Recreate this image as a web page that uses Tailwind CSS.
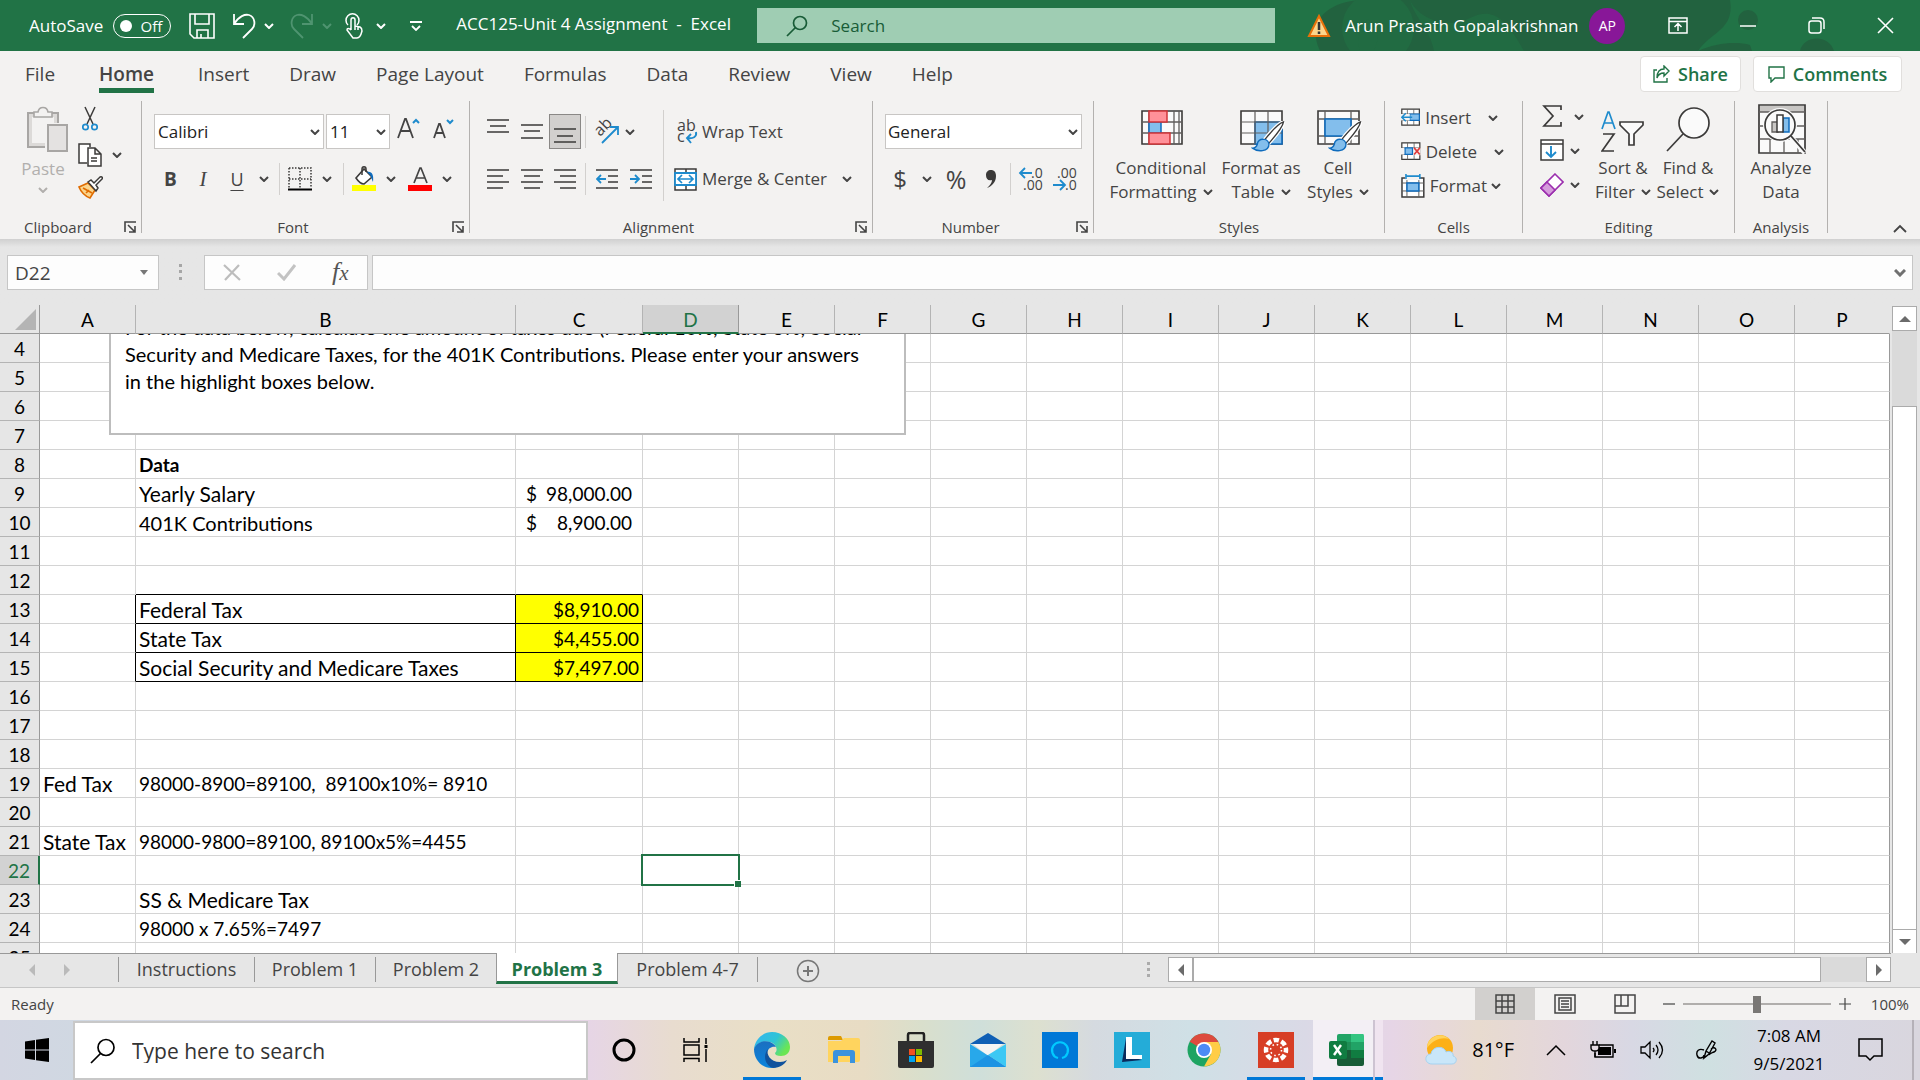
<!DOCTYPE html>
<html lang="en">
<head>
    <meta charset="UTF-8">
    <meta name="viewport" content="width=device-width, initial-scale=1.0">
    <title>ACC125-Unit 4 Assignment - Excel</title>
    <script src="https://cdn.jsdelivr.net/npm/@tailwindcss/browser@4"></script>
</head>
<body class="flex h-screen flex-col overflow-hidden bg-[#f3f2f1] font-['Open_Sans','Noto_Sans',sans-serif] text-[17px] leading-6 text-[#444]">

    <!-- Shared icons -->
    <svg class="hidden">
        <symbol id="chev" viewBox="0 0 10 6"><path d="M1 1l4 4 4-4" fill="none" stroke="currentColor" stroke-width="2"/></symbol>
        <symbol id="launcher" viewBox="0 0 12 12"><path d="M1 11V1h11M4 4l7 7M11 5v6H5" fill="none" stroke="currentColor" stroke-width="1.6"/></symbol>
        <symbol id="brush" viewBox="0 0 34 32"><path d="M33 1C27 3 17 15 13 20l4 4C22 18 32 8 33 1z" fill="#fff" stroke="#fff" stroke-width="4"/><path d="M33 1C27 3 17 15 13 20l4 4C22 18 32 8 33 1z" fill="#fff" stroke="#3b3a39" stroke-width="1.4"/><path d="M13 19c-4-1-7 2-7 5-1 3-3 4-5 4 5 4 17 4 17-4 0-2-2-5-5-5z" fill="#83beec" stroke="#0f6cbd" stroke-width="1.4"/></symbol>
    </svg>

    <!-- Title bar -->
    <header class="relative flex h-[51px] shrink-0 items-center bg-[#217346] text-white">
        <svg class="absolute right-0 top-0" width="720" height="51" viewBox="0 0 720 51">
            <g fill="#22623f">
                <path d="M120 51C105 20 130 0 165 0h365c5 30-20 32-32 51z"/>
                <circle cx="178" cy="28" r="36" fill="#216b42"/>
                <path d="M498 51c18-8 38-10 52-6l2 6z"/>
                <path d="M600 51c3-15 28-18 34 0z"/>
                <circle cx="548" cy="20" r="10"/>
            </g>
            <path d="M160 51c-4-14 2-28 8-32 14 10 10 22 6 32zM210 0c8 18 36 30 60 18 20-10 34-4 54 33h-90c-4-22-20-34-24-51z" fill="#216b42"/>
        </svg>
        <div class="relative flex w-full items-center">
            <label class="ml-[29px] flex items-center gap-[10px] text-[17px]">AutoSave
                <button class="flex h-6 w-[58px] items-center justify-between rounded-full border border-white pl-1.5 pr-2 text-[15px]"><span class="size-3 rounded-full bg-white"></span>Off</button>
            </label>
            <button class="ml-[18px]" aria-label="Save"><svg width="26" height="26" viewBox="0 0 26 26" fill="none" stroke="#fff" stroke-width="1.6"><path d="M1 1h24v24H5l-4-4zM6 1v10h14V1M8 25v-8h11v8M12 25v-4"/></svg></button>
            <button class="ml-[17px]" aria-label="Undo"><svg width="24" height="26" viewBox="0 0 24 26" fill="none" stroke="#fff" stroke-width="1.8"><path d="M2 1v10h10M2 11C7 3 13 1 17 2c6 2 7 10 3 14l-9 9"/></svg></button>
            <svg class="ml-2" width="10" height="6"><use href="#chev"/></svg>
            <button class="ml-4 text-[#4f9470]" aria-label="Redo"><svg width="24" height="26" viewBox="0 0 24 26" fill="none" stroke="currentColor" stroke-width="1.8"><path d="M22 1v10H12M22 11C17 3 11 1 7 2c-6 2-7 10-3 14l9 9"/></svg></button>
            <svg class="ml-2 text-[#4f9470]" width="10" height="6"><use href="#chev"/></svg>
            <button class="ml-3" aria-label="Touch mode"><svg width="20" height="26" viewBox="0 0 20 26" fill="none" stroke="#fff" stroke-width="1.5"><path d="M4 12a6.500 6.500 0 1 1 9 0"/><path d="M7 17V7c0-3 4-3 4 0v6l5 1c2 1 2 2 2 4-1 4-2 7-5 7H9l-6-8c0-2 2-2 4 0M11 13v4M14 14v3"/></svg></button>
            <svg class="ml-3" width="10" height="6"><use href="#chev"/></svg>
            <svg class="ml-6" width="12" height="10" viewBox="0 0 12 10" fill="none" stroke="#fff" stroke-width="1.8"><path d="M0 1h12M2 5l4 4 4-4"/></svg>
            <h1 class="ml-[34px] w-[301px] whitespace-pre pb-[3px]">ACC125-Unit 4 Assignment  -  Excel</h1>
            <label class="flex h-[35px] w-[518px] items-center bg-[#9fcdb3] pl-[29px] text-[#185c37]">
                <svg width="22" height="22" viewBox="0 0 22 22" fill="none" stroke="#185c37" stroke-width="1.7"><circle cx="14" cy="8" r="6.500"/><path d="M9.500 12.500L1 21"/></svg>
                <input class="ml-[23px] w-60 bg-transparent placeholder:text-[#185c37] outline-none" placeholder="Search" aria-label="Search">
            </label>
            <svg class="ml-8" width="24" height="24" viewBox="0 0 24 24"><path d="M12 2l10 20H2z" fill="#fbd58c" stroke="#e8710a" stroke-width="2"/><path d="M12 8v8M12 17.500v2.500" stroke="#333" stroke-width="2.500"/></svg>
            <span class="ml-[14px] w-[230px] whitespace-nowrap">Arun Prasath Gopalakrishnan</span>
            <button class="ml-[14px] flex size-9 items-center justify-center rounded-full bg-[#881798] text-[14px]">AP</button>
            <div class="ml-auto flex items-center gap-[52px] pr-[26px]">
                <button aria-label="Ribbon display options"><svg width="20" height="17" viewBox="0 0 20 17" fill="none" stroke="#fff" stroke-width="1.5"><path d="M1 1h18v15H1zM1 4.500h18M10 14V7M6.500 10L10 6.500l3.500 3.500"/></svg></button>
                <button aria-label="Minimize"><svg width="16" height="16"><path d="M0 8h16" stroke="#fff" stroke-width="1.5"/></svg></button>
                <button aria-label="Restore"><svg width="17" height="17" viewBox="0 0 17 17" fill="none" stroke="#fff" stroke-width="1.5"><rect x="1" y="4" width="12" height="12" rx="2.500"/><path d="M4 1h8q4 0 4 4v7"/></svg></button>
                <button aria-label="Close"><svg width="17" height="17"><path d="M1 1l15 15M16 1L1 16" stroke="#fff" stroke-width="1.6"/></svg></button>
            </div>
        </div>
    </header>

    <!-- Ribbon tabs -->
    <nav class="flex h-[50px] shrink-0 items-start gap-10 pl-[25px] pr-[18px] pt-[9px] text-[19px] leading-7">
        <a href="#">File</a>
        <a href="#" class="mx-1 border-b-[5px] border-[#217346] font-semibold">Home</a>
        <a href="#">Insert</a>
        <a href="#">Draw</a>
        <a href="#">Page Layout</a>
        <a href="#">Formulas</a>
        <a href="#">Data</a>
        <a href="#">Review</a>
        <a href="#">View</a>
        <a href="#">Help</a>
        <div class="-mt-1 ml-auto flex gap-3 font-semibold text-[#217346]">
            <button class="flex h-9 w-[101px] items-center justify-center gap-2 rounded border border-[#e1dfdd] bg-white text-[18px]"><svg width="17" height="18" viewBox="0 0 17 18" fill="none" stroke="currentColor" stroke-width="1.4"><path d="M4 5H1v12h13v-4M11 1l5 5-5 5V8c-4 0-6 2-7 5 0-6 3-9 7-9z"/></svg>Share</button>
            <button class="flex h-9 w-[149px] items-center justify-center gap-2 rounded border border-[#e1dfdd] bg-white text-[18px]"><svg width="17" height="17" viewBox="0 0 17 17" fill="none" stroke="currentColor" stroke-width="1.4"><path d="M1 1h15v11H7l-4 4v-4H1z"/></svg>Comments</button>
        </div>
    </nav>

    <!-- Ribbon -->
    <div class="flex h-[138px] shrink-0">
        <section class="flex h-[132px] w-[142px] flex-col border-r border-[#b3b1af]">
            <div class="flex flex-1 pt-[5px]">
                <button class="ml-[18px] flex w-[50px] flex-col items-center text-[#b1afad]">
                    <svg class="ml-2" width="42" height="46" viewBox="0 0 42 46" stroke="#a8a6a4" stroke-width="2"><path d="M2 7h30v34H2z" fill="#dcdad8"/><path d="M6 11h22v26H6z" fill="#f3f2f1" stroke="none"/><path d="M8 11V6h4c1-6 9-6 10 0h4v5z" fill="#f3f2f1" stroke-width="1.600"/><path d="M21 19h20v26H21z" fill="#e6e4e3" stroke="#f3f2f1" stroke-width="4"/><path d="M22 19h19v26H22z" fill="#e4e2e1"/></svg>
                    <span class="mt-[5px]">Paste</span>
                    <svg class="mt-1.5" width="10" height="6"><use href="#chev"/></svg>
                </button>
                <div class="ml-2.5 flex flex-col gap-3">
                    <button class="ml-1" aria-label="Cut"><svg width="16" height="25" viewBox="0 0 16 25" fill="none" stroke="#3b3a39" stroke-width="1.500"><path d="M3 1l8 17M13 1L5 18"/><circle cx="3.500" cy="21" r="2.700" stroke="#1e8bcd" stroke-width="1.700"/><circle cx="12.500" cy="21" r="2.700" stroke="#1e8bcd" stroke-width="1.700"/></svg></button>
                    <div class="flex items-center gap-[10px]">
                        <button aria-label="Copy"><svg width="24" height="24" viewBox="0 0 24 24" fill="#fff" stroke="#3b3a39" stroke-width="1.500"><path d="M9 20H1V1h11v3"/><path d="M10 5h7l6 6v12H10zM17 5v6h6M13 15h6M13 18h6"/></svg></button>
                        <svg width="10" height="6"><use href="#chev"/></svg>
                    </div>
                    <button class="-mt-1" aria-label="Format painter"><svg width="25" height="24" viewBox="0 0 25 24"><path d="M1 12l9-4 7 7-5 8C7 21 3 17 1 12z" fill="#fbd58c" stroke="#e06c00" stroke-width="1.600"/><path d="M8 18l3-3M5 13l9 5" stroke="#e06c00" stroke-width="1.600"/><path d="M10 7l3-2 3 3 6-6c2-1 3 1 2 2l-6 6 2 3-2 3z" fill="#fff" stroke="#3b3a39" stroke-width="1.500"/></svg></button>
                </div>
            </div>
            <div class="flex h-3 items-center justify-end gap-8 pr-[5px] text-[15px]"><span>Clipboard</span><svg width="12" height="12"><use href="#launcher"/></svg></div>
        </section>

        <section class="flex h-[132px] w-[328px] flex-col border-r border-[#b3b1af]">
            <div class="flex-1 pt-[13px]">
                <div class="flex h-[35px] items-center pl-3">
                    <div class="relative flex h-[35px] w-[170px] items-center">
                        <select aria-label="Font" class="size-full appearance-none border border-[#c8c6c4] bg-white pl-[3px] text-[#222]"><option>Calibri</option></select>
                        <svg class="absolute right-1" width="10" height="6"><use href="#chev"/></svg>
                    </div>
                    <div class="relative ml-0.5 flex h-[35px] w-16 items-center">
                        <select aria-label="Font size" class="size-full appearance-none border border-[#c8c6c4] bg-white pl-[3px] text-[#222]"><option>11</option></select>
                        <svg class="absolute right-1" width="10" height="6"><use href="#chev"/></svg>
                    </div>
                    <button class="-mt-2 ml-[7px]" aria-label="Increase font size"><svg width="23" height="24" viewBox="0 0 23 24" fill="none" stroke="#444" stroke-width="1.800"><path d="M1 22L8 3h1l7 19M3.500 15h10"/><path d="M16 7l3-3 3 3" stroke="#1e8bcd" stroke-width="2"/></svg></button>
                    <button class="-mt-2 ml-3" aria-label="Decrease font size"><svg width="23" height="24" viewBox="0 0 23 24" fill="none" stroke="#444" stroke-width="1.800"><path d="M2 22l5-14h1l5 14M4 17h7"/><path d="M15 4l3 3 3-3" stroke="#1e8bcd" stroke-width="2"/></svg></button>
                </div>
                <div class="mt-[14px] flex h-8 items-center pl-[22px]">
                    <button class="w-3 text-[19px] font-bold">B</button>
                    <button class="ml-[21px] w-3 font-['Liberation_Serif',serif] text-[21px] italic">I</button>
                    <button class="ml-[21px] w-3.5 text-[18px] underline underline-offset-4">U</button>
                    <svg class="ml-[15px]" width="10" height="6"><use href="#chev"/></svg>
                    <div class="ml-[10px] h-full w-px bg-[#d2d0ce]"></div>
                    <button class="ml-2" aria-label="Borders"><svg width="24" height="24" viewBox="0 0 24 24" fill="none" stroke="#3b3a39" stroke-width="1.500"><path d="M1 1h22v20M1 1v20M12 1v20M1 12h22" stroke-dasharray="1.500 1.500"/><path d="M0 22.500h24" stroke="#000" stroke-width="2"/></svg></button>
                    <svg class="ml-2.5" width="10" height="6"><use href="#chev"/></svg>
                    <div class="ml-[11px] h-full w-px bg-[#d2d0ce]"></div>
                    <button class="ml-2" aria-label="Fill color"><svg width="24" height="26" viewBox="0 0 24 26" fill="none"><path d="M4 12l8-9 8 8-8 7c-3 0-6-3-8-6z" fill="#fff" stroke="#3b3a39" stroke-width="1.600"/><path d="M10 9V3c0-3 4-3 4 0v3" stroke="#3b3a39" stroke-width="1.500"/><path d="M15 6c5-1 7 3 6 10-2-4-1-6-6-10z" fill="#0f6cbd"/><path d="M0 19h24v6H0z" fill="#ff0"/></svg></button>
                    <svg class="ml-2.5" width="10" height="6"><use href="#chev"/></svg>
                    <button class="ml-3" aria-label="Font color"><svg width="24" height="26" viewBox="0 0 24 26" fill="none"><path d="M6 17l6-15h1l6 15M8 12h9" stroke="#444" stroke-width="1.700"/><path d="M0 19h24v6H0z" fill="red"/></svg></button>
                    <svg class="ml-2.5" width="10" height="6"><use href="#chev"/></svg>
                </div>
            </div>
            <div class="flex h-3 items-center pr-[5px] text-[15px]"><span class="flex-1 pr-2 text-center">Font</span><svg width="12" height="12"><use href="#launcher"/></svg></div>
        </section>

        <section class="flex h-[132px] w-[403px] flex-col border-r border-[#b3b1af]">
            <div class="flex flex-1">
                <div class="w-[193px] pl-[11px] pt-[13px]">
                    <div class="flex h-[35px] items-center">
                        <button class="flex h-[35px] w-[34px] justify-center pt-1" aria-label="Top align"><svg width="22" height="16" stroke="#3b3a39" stroke-width="1.600"><path d="M0 2h22M3 8h16M0 14h22"/></svg></button>
                        <button class="flex h-[35px] w-[34px] items-center justify-center" aria-label="Middle align"><svg width="22" height="16" stroke="#3b3a39" stroke-width="1.600"><path d="M0 1h22M3 7h16M0 14h22"/></svg></button>
                        <button class="flex h-[35px] w-8 items-end justify-center border border-[#8a8886] bg-[#d2d0ce] pb-1" aria-label="Bottom align"><svg width="22" height="16" stroke="#3b3a39" stroke-width="1.600"><path d="M0 1h22M3 8h16M0 14h22"/></svg></button>
                        <div class="ml-1 h-8 w-px bg-[#d2d0ce]"></div>
                        <button class="ml-2" aria-label="Orientation"><svg class="overflow-visible" width="25" height="26" viewBox="0 0 25 26"><text x="0" y="0" transform="translate(6 18) rotate(-45)" font-size="16" fill="#444">ab</text><path d="M8 24L23 9M16 8h8v8" fill="none" stroke="#1e8bcd" stroke-width="1.800"/></svg></button>
                        <svg class="ml-1.5" width="10" height="6"><use href="#chev"/></svg>
                    </div>
                    <div class="mt-[14px] flex h-8 items-center">
                        <button class="flex w-[34px] justify-center" aria-label="Align left"><svg width="22" height="22" stroke="#3b3a39" stroke-width="1.600"><path d="M0 2h22M0 8h16M0 14h22M0 20h16"/></svg></button>
                        <button class="flex w-[34px] justify-center" aria-label="Center"><svg width="22" height="22" stroke="#3b3a39" stroke-width="1.600"><path d="M0 2h22M3 8h16M0 14h22M3 20h16"/></svg></button>
                        <button class="flex w-8 justify-center" aria-label="Align right"><svg width="22" height="22" stroke="#3b3a39" stroke-width="1.600"><path d="M0 2h22M6 8h16M0 14h22M6 20h16"/></svg></button>
                        <div class="ml-1 h-full w-px bg-[#d2d0ce]"></div>
                        <button class="ml-2.5" aria-label="Decrease indent"><svg width="22" height="22" fill="none" stroke="#3b3a39" stroke-width="1.600"><path d="M0 2h22M12 8h10M12 14h10M0 20h22"/><path d="M10 11H1M5 7l-4 4 4 4" stroke="#1e8bcd" stroke-width="1.800"/></svg></button>
                        <button class="ml-3" aria-label="Increase indent"><svg width="22" height="22" fill="none" stroke="#3b3a39" stroke-width="1.600"><path d="M0 2h22M12 8h10M12 14h10M0 20h22"/><path d="M0 11h9M5 7l4 4-4 4" stroke="#1e8bcd" stroke-width="1.800"/></svg></button>
                    </div>
                </div>
                <div class="mt-[9px] h-[91px] w-px bg-[#d2d0ce]"></div>
                <div class="pl-[10px] pt-[13px]">
                    <button class="flex h-[35px] items-center gap-1"><svg class="overflow-visible" width="24" height="26" viewBox="0 0 24 26" fill="none"><text x="3" y="12" font-size="16" fill="#444">ab</text><text x="3" y="23" font-size="16" fill="#444">c</text><path d="M22 13c1 5-3 7-9 6M17 15l-4 4 4 5" stroke="#1e8bcd" stroke-width="1.900"/></svg>Wrap Text</button>
                    <div class="mt-[14px] flex h-8 items-center">
                        <button class="flex items-center gap-[5px]"><svg width="23" height="23" viewBox="0 0 23 23" fill="none" stroke="#3b3a39" stroke-width="1.500"><path d="M1 1h21v21H1z" fill="#fff"/><path d="M12 1v21"/><path d="M1 5h21v12H1z" fill="#fff" stroke="#1e8bcd" stroke-width="1.800"/><path d="M4 11h15M8 7l-4 4 4 4M15 7l4 4-4 4" stroke="#1e8bcd" stroke-width="1.700"/></svg>Merge &amp; Center</button>
                        <svg class="ml-[15px]" width="10" height="6"><use href="#chev"/></svg>
                    </div>
                </div>
            </div>
            <div class="flex h-3 items-center pr-[5px] text-[15px]"><span class="flex-1 pr-2 text-center">Alignment</span><svg width="12" height="12"><use href="#launcher"/></svg></div>
        </section>

        <section class="flex h-[132px] w-[221px] flex-col border-r border-[#b3b1af]">
            <div class="flex-1 pt-[13px]">
                <div class="relative ml-3 flex h-[35px] w-[197px] items-center">
                    <select aria-label="Number format" class="size-full appearance-none border border-[#c8c6c4] bg-white pl-[2px] text-[#222]"><option>General</option></select>
                    <svg class="absolute right-1" width="10" height="6"><use href="#chev"/></svg>
                </div>
                <div class="mt-[14px] flex h-8 items-center pl-[20px]">
                    <button class="w-3.5 text-[24px]">$</button>
                    <svg class="ml-[15px]" width="10" height="6"><use href="#chev"/></svg>
                    <button class="ml-3 w-6 text-[25px]">%</button>
                    <button class="ml-[17px]" aria-label="Comma style"><svg width="12" height="20" viewBox="0 0 12 20"><path d="M6 1c3 0 5 2 5 6 0 6-4 10-9 12 3-3 5-5 5-8-4 1-6-1-6-5 0-3 2-5 5-5z" fill="#3b3a39"/></svg></button>
                    <div class="ml-[13px] h-full w-px bg-[#d2d0ce]"></div>
                    <button class="ml-2" aria-label="Increase decimal"><svg class="overflow-visible" width="24" height="25" viewBox="0 0 24 25" fill="none" font-size="14"><text x="12" y="11" fill="#444">.0</text><text x="4" y="23" fill="#444">.00</text><path d="M13 6H1M6 1L1 6l5 5" stroke="#1e8bcd" stroke-width="1.800"/></svg></button>
                    <button class="ml-2.5" aria-label="Decrease decimal"><svg class="overflow-visible" width="24" height="25" viewBox="0 0 24 25" fill="none" font-size="14"><text x="4" y="11" fill="#444">.00</text><text x="12" y="23" fill="#444">.0</text><path d="M0 18h12M7 13l5 5-5 5" stroke="#1e8bcd" stroke-width="1.800"/></svg></button>
                </div>
            </div>
            <div class="flex h-3 items-center pr-[5px] text-[15px]"><span class="flex-1 pr-2 text-center">Number</span><svg width="12" height="12"><use href="#launcher"/></svg></div>
        </section>

        <section class="flex h-[132px] w-[291px] flex-col border-r border-[#b3b1af]">
            <div class="flex flex-1 pl-3 pt-[9px]">
                <button class="flex w-[110px] flex-col items-center">
                    <svg class="ml-0.5" width="42" height="42" viewBox="0 0 42 42" fill="none"><path d="M1 1h40v33H1z" fill="#fafafa" stroke="#3b3a39" stroke-width="1.600"/><path d="M8 1v33M33 1v33M38 1v33M1 12h40M1 23h40" stroke="#605e5c" stroke-width="1.300"/><path d="M8 12h12v11H8z" fill="#83beec" stroke="#0f6cbd" stroke-width="1.500"/><path d="M8 1h18v11H8zM8 23h21v11H8z" fill="#ff9199" stroke="#d13438" stroke-width="1.500"/></svg>
                    <span class="mt-1">Conditional</span>
                    <span class="flex items-center gap-1.5">Formatting <svg width="10" height="6"><use href="#chev"/></svg></span>
                </button>
                <button class="flex w-[90px] flex-col items-center">
                    <svg class="ml-1" width="46" height="42" viewBox="0 0 46 42" fill="none"><path d="M1 1h41v33H1z" fill="#fafafa" stroke="#3b3a39" stroke-width="1.600"/><path d="M15 12h27v22H15z" fill="#83beec" stroke="#0f6cbd" stroke-width="1.600"/><path d="M15 1v33M28 1v33M1 12h41M1 23h41" stroke="#605e5c" stroke-width="1.200"/><use href="#brush" x="11" y="11" width="34" height="31"/></svg>
                    <span class="mt-1">Format as</span>
                    <span class="flex items-center gap-1.5">Table <svg width="10" height="6"><use href="#chev"/></svg></span>
                </button>
                <button class="flex w-[64px] flex-col items-center">
                    <svg class="ml-1" width="46" height="42" viewBox="0 0 46 42" fill="none"><path d="M1 1h41v33H1z" fill="#fafafa" stroke="#3b3a39" stroke-width="1.600"/><path d="M8 1v33M34 1v33M1 9h41M1 26h41" stroke="#605e5c" stroke-width="1.300"/><path d="M8 9h26v17H8z" fill="#83beec" stroke="#0f6cbd" stroke-width="1.600"/><use href="#brush" x="11" y="11" width="34" height="31"/></svg>
                    <span class="mt-1">Cell</span>
                    <span class="flex items-center gap-1.5">Styles <svg width="10" height="6"><use href="#chev"/></svg></span>
                </button>
            </div>
            <div class="flex h-3 items-center text-[15px]"><span class="flex-1 text-center">Styles</span></div>
        </section>

        <section class="flex h-[132px] w-[138px] flex-col border-r border-[#b3b1af]">
            <div class="flex flex-1 flex-col gap-2.5 pl-4 pt-[5px]">
                <div class="flex items-center"><button class="flex w-[70px] items-center gap-[5px]"><svg width="24" height="24" viewBox="0 0 24 24" fill="none"><path d="M1 1h22v20H1z" fill="#fff" stroke="#3b3a39" stroke-width="1.500"/><path d="M8 1v20M16 1v20M1 7h22M1 15h22" stroke="#605e5c"/><path d="M11 7h12v8H11z" fill="#83beec" stroke="#0f6cbd" stroke-width="1.500"/><path d="M0 7h11v8H0z" fill="#f3f2f1"/><path d="M14 11H1M6 6l-5 5 5 5" stroke="#1e8bcd" stroke-width="1.900"/></svg>Insert</button><svg class="ml-[17px]" width="10" height="6"><use href="#chev"/></svg></div>
                <div class="flex items-center"><button class="flex w-[76px] items-center gap-[5px]"><svg width="24" height="24" viewBox="0 0 24 24" fill="none"><path d="M1 1h22v20H1z" fill="#fff" stroke="#3b3a39" stroke-width="1.500"/><path d="M8 1v20M16 1v20M1 7h22M1 15h22" stroke="#605e5c"/><path d="M14 7h10v9H14zM0 7h4v8H0z" fill="#f3f2f1"/><path d="M5 7h9v8H5z" fill="#83beec" stroke="#0f6cbd" stroke-width="1.500"/><path d="M16 7l7 8M23 7l-7 8" stroke="#e03a3a" stroke-width="2"/></svg>Delete</button><svg class="ml-[17px]" width="10" height="6"><use href="#chev"/></svg></div>
                <div class="flex items-center"><button class="flex w-[86px] items-center gap-[5px]"><svg width="24" height="24" viewBox="0 0 24 24" fill="none"><path d="M1 4h22v19H1z" fill="#fff" stroke="#3b3a39" stroke-width="1.500"/><path d="M6 4v19M18 4v19M1 9h22M1 17h22" stroke="#605e5c"/><path d="M4 0h15v6H4z" fill="#f3f2f1"/><path d="M6 9h12v8H6z" fill="#83beec" stroke="#0f6cbd" stroke-width="1.500"/><path d="M5 2h14M5 0v5M19 0v5" stroke="#1e8bcd" stroke-width="1.600"/></svg>Format</button><svg class="ml-1" width="10" height="6"><use href="#chev"/></svg></div>
            </div>
            <div class="flex h-3 items-center text-[15px]"><span class="flex-1 text-center">Cells</span></div>
        </section>

        <section class="flex h-[132px] w-[212px] flex-col border-r border-[#b3b1af]">
            <div class="flex flex-1 pl-[17px]">
                <div class="flex w-[44px] flex-col gap-2.5 pt-1">
                    <button class="flex items-center gap-2.5" aria-label="AutoSum"><svg width="24" height="24" viewBox="0 0 24 24" fill="none" stroke="#3b3a39" stroke-width="1.700"><path d="M21 5V1H4l9 10L4 21h17v-4"/></svg><svg width="10" height="6"><use href="#chev"/></svg></button>
                    <button class="flex items-center gap-1.5" aria-label="Fill"><svg width="24" height="24" viewBox="0 0 24 24" fill="none" stroke="#3b3a39" stroke-width="1.500"><path d="M1 1h22v20H1z" fill="#fff"/><path d="M1 5h22"/><path d="M11 7v11M6 13l5 5 5-5" stroke="#1e8bcd" stroke-width="1.900"/></svg><svg width="10" height="6"><use href="#chev"/></svg></button>
                    <button class="flex items-center gap-1.5" aria-label="Clear"><svg width="24" height="24" viewBox="0 0 24 24" stroke="#9b2fae" stroke-width="1.600"><path d="M15 1l8 8L9 23l-8-8z" fill="#fff"/><path d="M7 9l8 8-6 6-8-8z" fill="#d59bdc"/></svg><svg width="10" height="6"><use href="#chev"/></svg></button>
                </div>
                <button class="ml-[7px] flex w-[64px] flex-col items-center pt-[9px]">
                    <svg width="44" height="42" viewBox="0 0 44 42" fill="none" stroke="#3b3a39" stroke-width="1.700"><path d="M1 19L7 2h1l6 17M3 13h9" stroke="#1e8bcd"/><path d="M2 24h11L1 41h12"/><path d="M19 12h23v3l-9 9v11h-5V24l-9-9z" fill="#fafafa"/></svg>
                    <span class="mt-1 whitespace-nowrap">Sort &amp;</span>
                    <span class="flex items-center gap-1.5">Filter <svg width="10" height="6"><use href="#chev"/></svg></span>
                </button>
                <button class="flex w-[66px] flex-col items-center pt-[6px]">
                    <svg width="44" height="45" viewBox="0 0 44 45" fill="#fafafa" stroke="#3b3a39" stroke-width="1.700"><circle cx="28" cy="16" r="15"/><path d="M17 27L1 44"/></svg>
                    <span class="mt-1 whitespace-nowrap">Find &amp;</span>
                    <span class="flex items-center gap-1.5">Select <svg width="10" height="6"><use href="#chev"/></svg></span>
                </button>
            </div>
            <div class="flex h-3 items-center text-[15px]"><span class="flex-1 text-center">Editing</span></div>
        </section>

        <section class="flex h-[132px] w-[93px] flex-col border-r border-[#b3b1af]">
            <div class="flex flex-1 flex-col items-center pt-[3px]">
                <button class="flex flex-col items-center">
                    <svg class="ml-0.5" width="48" height="50" viewBox="0 0 48 50" fill="none"><path d="M1 1h46v48H1z" fill="#fafafa" stroke="#3b3a39" stroke-width="1.700"/><path d="M2 2h44v6H2z" fill="#c8c6c4"/><path d="M1 8h46M1 22h46M1 35h46M12 35v14M26 35v14M40 35v14" stroke="#605e5c" stroke-width="1.300"/><circle cx="22" cy="21" r="17" fill="#fafafa"/><path d="M32 32l15 17" stroke="#fafafa" stroke-width="5"/><path d="M33 32l14 16" stroke="#3b3a39" stroke-width="1.800"/><circle cx="22" cy="21" r="15" fill="#fafafa" stroke="#3b3a39" stroke-width="1.700"/><path d="M14 18h6v10h-6z" fill="#c8c6c4" stroke="#605e5c" stroke-width="1.300"/><path d="M25 14h6v14h-6z" fill="#83beec" stroke="#0f6cbd" stroke-width="1.500"/><path d="M19 11h6v17h-6z" fill="#fff" stroke="#3b3a39" stroke-width="1.500"/></svg>
                    <span class="mt-0.5">Analyze</span>
                    <span>Data</span>
                </button>
            </div>
            <div class="flex h-3 items-center text-[15px]"><span class="flex-1 text-center">Analysis</span></div>
        </section>
        <button class="mb-1.5 ml-auto mr-[13px] self-end" aria-label="Collapse the ribbon"><svg width="14" height="9" fill="none" stroke="#444" stroke-width="1.800"><path d="M1 8l6-6 6 6"/></svg></button>
    </div>

    <!-- Formula bar -->
    <div class="flex h-[66px] shrink-0 bg-[#e6e6e6] bg-linear-to-b from-[#d0d0d0] to-[#e6e6e6] to-[8px] pl-[7px] pr-[7px] pt-4">
        <div class="flex h-[35px] w-[152px] items-center border border-[#c6c6c6] bg-[#fdfdfd] pl-[7px] pr-[10px]">
            <input class="w-full bg-transparent text-[19px] outline-none" value="D22" aria-label="Name box">
            <svg width="8" height="5"><path d="M0 0h8L4 5z" fill="#777"/></svg>
        </div>
        <svg class="ml-5 mt-2" width="4" height="20" fill="#a6a6a6"><path d="M0 1h3v3H0zM0 7h3v3H0zM0 14h3v3H0z"/></svg>
        <div class="ml-[21px] flex h-[35px] w-[164px] items-center border border-[#c6c6c6] bg-[#fdfdfd] pl-[18px]">
            <button aria-label="Cancel"><svg width="18" height="17" fill="none" stroke="#bdbdbd" stroke-width="2.200"><path d="M1 1l16 15M16 1L2 16"/></svg></button>
            <button class="ml-9" aria-label="Enter"><svg width="20" height="17" fill="none" stroke="#c3c3c3" stroke-width="3"><path d="M1 9l6 6L18 1"/></svg></button>
            <button class="ml-[35px] font-['Liberation_Serif',serif] text-[26px] italic text-[#555]" aria-label="Insert function">f<span class="text-[21px]">x</span></button>
        </div>
        <label class="ml-1 flex h-[35px] flex-1 items-center border border-[#c6c6c6] bg-[#fdfdfd] pr-1.5">
            <input class="w-full bg-transparent pl-2 outline-none" aria-label="Formula">
            <svg width="12" height="8" fill="none" stroke="#707070" stroke-width="3"><path d="M1 1l5 5 5-5"/></svg>
        </label>
    </div>

    <!-- Worksheet -->
    <main class="flex min-h-0 flex-1 bg-[#e6e6e6] font-['Lato','Carlito',sans-serif] text-[19px] text-black">
        <div class="relative min-w-0 flex-1 overflow-hidden">
            <table class="w-full table-fixed border-separate border-spacing-0 bg-white">
                <colgroup>
                    <col class="w-10"><col class="w-24"><col class="w-[380px]"><col class="w-[127px]">
                    <col class="w-24"><col class="w-24"><col class="w-24"><col class="w-24"><col class="w-24"><col class="w-24">
                    <col class="w-24"><col class="w-24"><col class="w-24"><col class="w-24"><col class="w-24"><col class="w-24"><col>
                </colgroup>
                <thead><tr id="columns"></tr></thead>
                <tbody id="rows"></tbody>
            </table>
            <!-- Instruction text box floating over the cells -->
            <div class="pointer-events-none absolute inset-x-0 bottom-0 top-[29px] overflow-hidden">
                <div class="absolute -top-[60px] left-[109px] h-[161px] w-[797px] whitespace-nowrap border-2 border-[#bdbdbd] bg-white pl-[14px] pt-[38px] text-[20px] leading-[27px]">
                    For the data below, calculate the amount of taxes due (Federal 10%, State 5%, Social<br>
                    Security and Medicare Taxes, for the 401K Contributions. Please enter your answers<br>
                    in the highlight boxes below.
                </div>
            </div>
        </div>
        <div class="ml-[2px] mr-[3px] flex w-[25px] flex-col pt-px">
            <button class="flex h-[25px] shrink-0 items-center justify-center border border-[#ababab] bg-white" aria-label="Scroll up"><svg width="12" height="6"><path d="M0 6h12L6 0z" fill="#6b6b6b"/></svg></button>
            <div class="h-[75px] shrink-0 bg-[#dadada]"></div>
            <div class="flex-1 border border-[#ababab] bg-white"></div>
            <button class="-mb-px -mt-px flex h-[25px] shrink-0 items-center justify-center border border-[#ababab] bg-white" aria-label="Scroll down"><svg width="12" height="6"><path d="M0 0h12L6 6z" fill="#6b6b6b"/></svg></button>
        </div>
    </main>

    <!-- Sheet tabs -->
    <div class="flex h-[35px] shrink-0 border-b border-[#c6c6c6] bg-[#e6e6e6] pr-[29px] text-[18px]">
        <div class="flex flex-1 border-t border-[#999]">
            <div class="mb-[5px] mt-[3px] flex w-[119px] items-center gap-[29px] border-r border-[#999] pl-[29px]">
                <svg width="6" height="12"><path d="M6 0v12L0 6z" fill="#bababa"/></svg>
                <svg width="6" height="12"><path d="M0 0v12l6-6z" fill="#bababa"/></svg>
            </div>
            <button class="mb-[5px] mt-[3px] w-[136px] border-r border-[#999] pb-0.5">Instructions</button>
            <button class="mb-[5px] mt-[3px] w-[121px] border-r border-[#999] pb-0.5">Problem 1</button>
            <button class="mb-[5px] mt-[3px] w-[120px] pb-0.5">Problem 2</button>
            <button class="-mt-px mb-[3px] w-[122px] border-x border-b-[3px] border-x-[#999] border-b-[#217346] bg-white pt-[3px] font-bold text-[#217346]">Problem 3</button>
            <button class="mb-[5px] mt-[3px] w-[140px] border-r border-[#999] pb-0.5">Problem 4-7</button>
            <button class="ml-[38px]" aria-label="New sheet"><svg width="24" height="24" fill="none" stroke="#777" stroke-width="1.500"><circle cx="12" cy="12" r="10.500"/><path d="M12 7v10M7 12h10" stroke-width="2"/></svg></button>
            <svg class="ml-auto mr-[17px] mt-2" width="4" height="18" fill="#ababab"><path d="M0 0h3v3H0zM0 6h3v3H0zM0 12h3v3H0z"/></svg>
        </div>
        <div class="flex w-[723px] border-t border-[#999] pb-[5px] pt-[3px]">
            <button class="flex w-[25px] items-center justify-center border border-[#ababab] bg-white" aria-label="Scroll left"><svg width="6" height="12"><path d="M6 0v12L0 6z" fill="#6b6b6b"/></svg></button>
            <div class="w-[628px] border border-[#ababab] bg-white"></div>
            <div class="flex-1 bg-[#dadada]"></div>
            <button class="flex w-[25px] items-center justify-center border border-[#ababab] bg-white" aria-label="Scroll right"><svg width="6" height="12"><path d="M0 0v12l6-6z" fill="#6b6b6b"/></svg></button>
        </div>
    </div>

    <!-- Status bar -->
    <div class="flex h-8 shrink-0 items-center pl-[11px] pr-[11px] text-[15px]">
        <span>Ready</span>
        <div class="ml-auto flex h-full items-center">
            <button class="flex h-full w-[60px] items-center justify-center bg-[#d2d0ce]" aria-label="Normal"><svg width="20" height="20" fill="none" stroke="#444" stroke-width="1.500"><path d="M1 1h18v18H1zM7 1v18M13 1v18M1 7h18M1 13h18"/></svg></button>
            <button class="flex w-[60px] justify-center" aria-label="Page layout"><svg width="22" height="20" fill="none" stroke="#444" stroke-width="1.500"><path d="M1 1h20v18H1zM5 4h12v12H5zM7 7h8M7 10h8M7 13h8"/></svg></button>
            <button class="flex w-[60px] justify-center" aria-label="Page break preview"><svg width="22" height="20" fill="none" stroke="#444" stroke-width="1.500"><path d="M1 1h20v18H1zM1 12h13V1M7 1v11"/></svg></button>
            <button class="ml-[8px]" aria-label="Zoom out"><svg width="12" height="12"><path d="M0 6h12" stroke="#444" stroke-width="1.200"/></svg></button>
            <input type="range" min="0" max="100" value="50" aria-label="Zoom" class="ml-2 h-[18px] w-[148px] appearance-none bg-[linear-gradient(#b0aeac,#b0aeac)] bg-[length:100%_2px] bg-center bg-no-repeat [&::-webkit-slider-thumb]:h-[17px] [&::-webkit-slider-thumb]:w-2 [&::-webkit-slider-thumb]:appearance-none [&::-webkit-slider-thumb]:bg-[#797775]">
            <button class="ml-2" aria-label="Zoom in"><svg width="12" height="12"><path d="M0 6h12M6 0v12" stroke="#444" stroke-width="1.200"/></svg></button>
            <span class="ml-[18px] w-10 text-right">100%</span>
        </div>
    </div>

    <!-- Windows taskbar -->
    <footer class="flex h-[60px] shrink-0 items-center bg-[linear-gradient(90deg,#d3d6e2_0%,#d0d8e2_4%,#e6d5e6_30.600%,#e8dccf_35%,#e9dfc6_40%,#e8dcc4_45%,#d9dfcc_48%,#cfdfda_51%,#dde0cf_54%,#d5dae0_57%,#cfe0e6_62%,#dad9e6_68%,#e6d5e6_72.500%,#e8dbcf_77%,#e3d6dc_81.500%,#d8d8e4_85%,#cfe0e1_89%,#d8d8e4_93%,#d9d6de_100%)] text-[20px] text-black">
        <button class="flex w-[73px] justify-center" aria-label="Start"><svg width="24" height="24" viewBox="0 0 24 24"><path d="M0 3.500L10 2v9.500H0zM11 1.800L24 0v11.500H11zM0 12.500h10V22L0 20.500zM11 12.500h13V24l-13-1.800z"/></svg></button>
        <label class="flex h-[59px] w-[515px] items-center self-end border-2 border-[#c8c8c8] bg-white pl-[15px]">
            <svg width="26" height="26" viewBox="0 0 26 26" fill="none" stroke="#000" stroke-width="1.700"><circle cx="16" cy="9.500" r="8"/><path d="M10.500 15.500L1 25"/></svg>
            <input class="ml-4 w-96 bg-transparent text-[21px] placeholder:text-[#333] outline-none" placeholder="Type here to search" aria-label="Type here to search">
        </label>
        <button class="flex w-[72px] justify-center" aria-label="Cortana"><svg width="24" height="24"><circle cx="12" cy="12" r="10" fill="none" stroke="#000" stroke-width="3"/></svg></button>
        <button class="flex w-[72px] justify-center" aria-label="Task view"><svg width="26" height="24" fill="none" stroke="#000" stroke-width="1.500"><path d="M1 0v4h15V0M1 7h15v10H1zM1 24v-3.500h15V24M23 0v6M23 11v13"/><path d="M21.500 7h3v3h-3z" fill="#000" stroke="none"/></svg></button>
        <button class="relative ml-1 flex h-full w-[72px] items-center justify-center" aria-label="Edge">
            <svg width="36" height="36" viewBox="0 0 36 36">
                <defs>
                    <linearGradient id="edgeTop" x1="0" x2="1" y2=".5"><stop offset="0" stop-color="#35b5f1"/><stop offset=".6" stop-color="#2fc4d6"/><stop offset="1" stop-color="#6be653"/></linearGradient>
                    <linearGradient id="edgeLeft" x2="0" y2="1"><stop stop-color="#1b6fc0"/><stop offset="1" stop-color="#0a84dc"/></linearGradient>
                </defs>
                <path d="M0 17C1 7 9 0 18 0c10 0 18 7 18 15 0 6-4 9-9 9-4 0-6-1-6-3 3-2 2-9-5-11C9 8 3 11 0 17z" fill="url(#edgeTop)"/>
                <path d="M0 17C3 10 10 8 16 10c3 1 5 3 6 5-4-1-8 1-9 6-1 7 5 12 12 13-12 6-25-3-25-17z" fill="url(#edgeLeft)"/>
                <path d="M14 17c-2 5 2 13 12 13 3 0 5-1 7-2-2 4-7 8-14 8-7-2-11-12-5-19z" fill="#10529c"/>
            </svg>
            <span class="absolute bottom-0 h-[3px] w-[58px] bg-[#0078d7]"></span>
        </button>
        <button class="flex w-[72px] justify-center" aria-label="File Explorer"><svg width="32" height="28" viewBox="0 0 32 28"><path d="M0 2q0-2 2-2h11l2 4H0z" fill="#dd9a00"/><path d="M0 5h13l3-3h14q2 0 2 2v20q0 2-2 2H0z" fill="#ffd45e"/><path d="M5 27V17q0-3 3-3h16q3 0 3 3v10h-5v-7H10v7z" fill="#3b93dd"/></svg></button>
        <button class="flex w-[72px] justify-center" aria-label="Microsoft Store"><svg width="36" height="36" viewBox="0 0 36 36"><path d="M10 10V3q0-2 2-2h12q2 0 2 2v7" fill="none" stroke="#222" stroke-width="2.500"/><path d="M0 9h36v25q0 2-2 2H2q-2 0-2-2z" fill="#2f2f2f"/><path d="M11 17h6v6h-6z" fill="#f25022"/><path d="M18 17h6v6h-6z" fill="#7fba00"/><path d="M11 24h6v6h-6z" fill="#00a4ef"/><path d="M18 24h6v6h-6z" fill="#ffb900"/></svg></button>
        <button class="flex w-[72px] justify-center" aria-label="Mail"><svg width="36" height="34" viewBox="0 0 36 34"><path d="M0 11L18 0l18 11z" fill="#0f5fb5"/><path d="M3 11h30L18 23z" fill="#f4f4f4"/><path d="M0 11l36 23H0z" fill="#28a8ea"/><path d="M36 11v23L18 22z" fill="#3cc8f4"/><path d="M0 34l18-12 18 12z" fill="#1c93e3"/></svg></button>
        <button class="flex w-[72px] justify-center" aria-label="Alexa"><svg width="36" height="36"><path d="M0 0h36v36H0z" fill="#0078d7"/><path d="M16 26a8 8 0 1 1 4 0" fill="none" stroke="#00caff" stroke-width="2.200"/></svg></button>
        <button class="flex w-[72px] justify-center" aria-label="L"><svg width="36" height="36"><path d="M0 0h36v36H0z" fill="#24acd8"/><path d="M12 6L8 30l20-2-14-4z" fill="#0b2b5c"/><path d="M12 5h6v18h10v4H12z" fill="#fff"/></svg></button>
        <button class="flex w-[72px] justify-center" aria-label="Chrome"><svg width="34" height="34" viewBox="0 0 34 34"><circle cx="17" cy="17" r="16.500" fill="#1da462"/><path d="M17 17L2.700 8.800A16.500 16.500 0 0 1 31.300 8.800z" fill="#dd4b3e"/><path d="M17 9h14.500A16.500 16.500 0 0 1 17 33.500l7-12.500z" fill="#ffcd46"/><circle cx="17" cy="17" r="8" fill="#fff"/><circle cx="17" cy="17" r="6.200" fill="#4c8bf5"/></svg></button>
        <button class="relative flex h-full w-[72px] items-center justify-center" aria-label="Canvas">
            <svg width="36" height="36"><path d="M0 0h36v36H0z" fill="#d73e26"/><circle cx="18" cy="18" r="10" fill="none" stroke="#fff" stroke-width="4.500" stroke-dasharray="5.400 2.450" stroke-dashoffset="2.700"/><circle cx="18" cy="18" r="5.500" fill="none" stroke="#fff" stroke-width="1.600" stroke-dasharray="1.600 2.720"/></svg>
            <span class="absolute bottom-0 h-[3px] w-[58px] bg-[#0078d7]"></span>
        </button>
        <button class="relative ml-px flex h-full w-[70px] items-center border-r-8 border-[#f0e4f0] bg-[#f3eff5] pl-4" aria-label="Excel">
            <svg width="36" height="32" viewBox="0 0 36 32"><path d="M10 0h13v9H8V2q0-2 2-2z" fill="#21a366"/><path d="M22 0h12q1 0 1 2v7H22z" fill="#33c481"/><path d="M8 8h14v8H8z" fill="#1f8f57"/><path d="M22 8h13v8H22z" fill="#21a366"/><path d="M8 16h27v14q0 2-2 2H10q-2 0-2-2z" fill="#185c37"/><path d="M22 16h13v8H22z" fill="#107c41"/><path d="M2 7h14q2 0 2 2v14q0 2-2 2H2q-2 0-2-2V9q0-2 2-2z" fill="#107c41"/><path d="M5 11l7 10M12 11L5 21" stroke="#fff" stroke-width="2.400"/></svg>
            <span class="absolute bottom-0 left-0 h-[3px] w-[70px] bg-[#0078d7]"></span>
            <span class="absolute right-0 h-full w-0.5 bg-[#cdc3d2]"></span>
        </button>

        <div class="ml-auto flex h-full items-center">
            <button class="flex items-center gap-[14px] whitespace-nowrap"><svg width="33" height="30" viewBox="0 0 33 30"><circle cx="15" cy="13" r="13" fill="#fcb017"/><path d="M2 13a13 13 0 0 1 22-9C17 2 9 4 2 13z" fill="#ffd35c"/><path d="M7 29C-1 29-1 19 6 19c1-8 13-9 15-2 4-2 8 1 7 4 5 1 4 8-1 8z" fill="#c9e6f9" stroke="#a5d2f0"/></svg><span>81°F</span></button>
            <button class="ml-8" aria-label="Show hidden icons"><svg width="20" height="12" fill="none" stroke="#000" stroke-width="1.500"><path d="M1 11l9-9 9 9"/></svg></button>
            <button class="ml-6" aria-label="Battery"><svg width="26" height="18" viewBox="0 0 26 18" fill="none" stroke="#000" stroke-width="1.400"><path d="M9 4h14v12H5v-4"/><path d="M8 6h13v8H8zM24 8h2v4h-2z" fill="#000" stroke="none"/><path d="M1 4h8v3c0 4-8 4-8 0zM3 4V0M7 4V0M5 10v6" fill="#e4dae2"/></svg></button>
            <button class="ml-6" aria-label="Volume"><svg width="24" height="20" fill="none" stroke="#000" stroke-width="1.300"><path d="M1 7h4l5-5v16l-5-5H1zM13 8q2 2 0 4M16 5q4 5 0 10M19 2q7 8 0 16"/></svg></button>
            <button class="ml-8" aria-label="Pen"><svg width="22" height="20" viewBox="0 0 22 20" fill="none" stroke="#000" stroke-width="1.400"><path d="M8 18l2-7 6-10 3 2-6 11zM10 11l3 2M8 10c-5-2-8 1-7 5 1 5 7 3 7 0M15 9c4-3 7 1 3 3-2 1-4 1-5 3"/></svg></button>
            <div class="ml-8 w-[78px] whitespace-nowrap text-center text-[17px] leading-[28px]">7:08 AM<br>9/5/2021</div>
            <button class="ml-[30px]" aria-label="Notifications"><svg width="25" height="24" fill="none" stroke="#000" stroke-width="1.500"><path d="M1 1h23v17h-8l-4 4-4-4H1z"/></svg></button>
            <div class="ml-[29px] mr-1.5 h-full w-0.5 bg-[#b5b1b8]"></div>
        </div>
    </footer>

    <script>
        const letters = 'ABCDEFGHIJKLMNOP'.split('');
        const data = {
            B8: '<b>Data</b>', B9: label('Yearly Salary'), B10: mixed('401K Contributions'),
            C9: money('98,000.00'), C10: money('8,900.00'),
            B13: label('Federal Tax'), C13: '$8,910.00',
            B14: label('State Tax'), C14: '$4,455.00',
            B15: label('Social Security and Medicare Taxes'), C15: '$7,497.00',
            A19: label('Fed Tax'), B19: '98000-8900=89100,&nbsp; 89100x10%= 8910',
            A21: label('State Tax'), B21: '98000-9800=89100, 89100x5%=4455',
            B23: label('SS &amp; Medicare Tax'), B24: '98000 x 7.65%=7497',
            D22: '<div class="absolute -inset-[2px] z-10 border-2 border-[#217346]"><span class="absolute -bottom-[3px] -right-[3px] size-[7px] border-l border-t border-white bg-[#217346]"></span></div>'
        };

        function label(text) {
            return '<div class="text-[21px] leading-6">' + text + '</div>';
        }

        function mixed(text) {
            return '<div class="text-[20px] leading-6">' + text + '</div>';
        }

        function money(value) {
            return '<div class="flex justify-between pl-[7px] pr-[7px]"><span>$</span><span>' + value + '</span></div>';
        }

        // Column headers
        let head = '<th class="h-[29px] border-b border-r border-[#999] bg-[#e6e6e6] p-0"><svg class="ml-auto mr-[3px]" width="21" height="21"><path d="M21 0v21H0z" fill="#b4b4b4"/></svg></th>';
        letters.forEach(function (l) {
            head += l === 'D'
                ? '<th class="h-[29px] border-b-2 border-r border-b-[#217346] border-r-[#999] bg-[#d2d2d2] p-0 pt-[3px] align-top font-normal leading-6 text-[#217346]">' + l + '</th>'
                : '<th class="h-[29px] border-b border-r border-b-[#999] border-r-[#b4b4b4] bg-[#e6e6e6] p-0 pt-[3px] align-top font-normal leading-6 last:border-r-[#e6e6e6]">' + l + '</th>';
        });
        document.getElementById('columns').innerHTML = head;

        // Rows 4 to 25
        let body = '';
        for (let r = 4; r <= 25; r++) {
            body += r === 22
                ? '<tr><th class="h-[29px] border-b border-r-2 border-b-[#b4b4b4] border-r-[#217346] bg-[#d2d2d2] p-0 pt-0.5 font-normal leading-6 text-[#217346]">22</th>'
                : '<tr><th class="h-[29px] border-b border-r border-b-[#b4b4b4] border-r-[#999] bg-[#e6e6e6] p-0 pt-0.5 font-normal leading-6">' + r + '</th>';
            letters.forEach(function (l) {
                const boxed = r >= 13 && r <= 15;
                let c = 'relative h-[29px] border-b border-r p-0 px-[3px] pt-0.5 whitespace-nowrap leading-6 last:border-r-[#999]';
                c += (l === 'B' || l === 'C') && r >= 12 && r <= 15 ? ' border-b-black' : ' border-b-[#d4d4d4]';
                c += boxed && (l === 'A' || l === 'B' || l === 'C') ? ' border-r-black' : ' border-r-[#d4d4d4]';
                if (boxed && l === 'C') c += ' bg-[#ffff00] text-right';
                body += '<td class="' + c + '">' + (data[l + r] || '') + '</td>';
            });
            body += '</tr>';
        }
        document.getElementById('rows').innerHTML = body;
    </script>
</body>
</html>
